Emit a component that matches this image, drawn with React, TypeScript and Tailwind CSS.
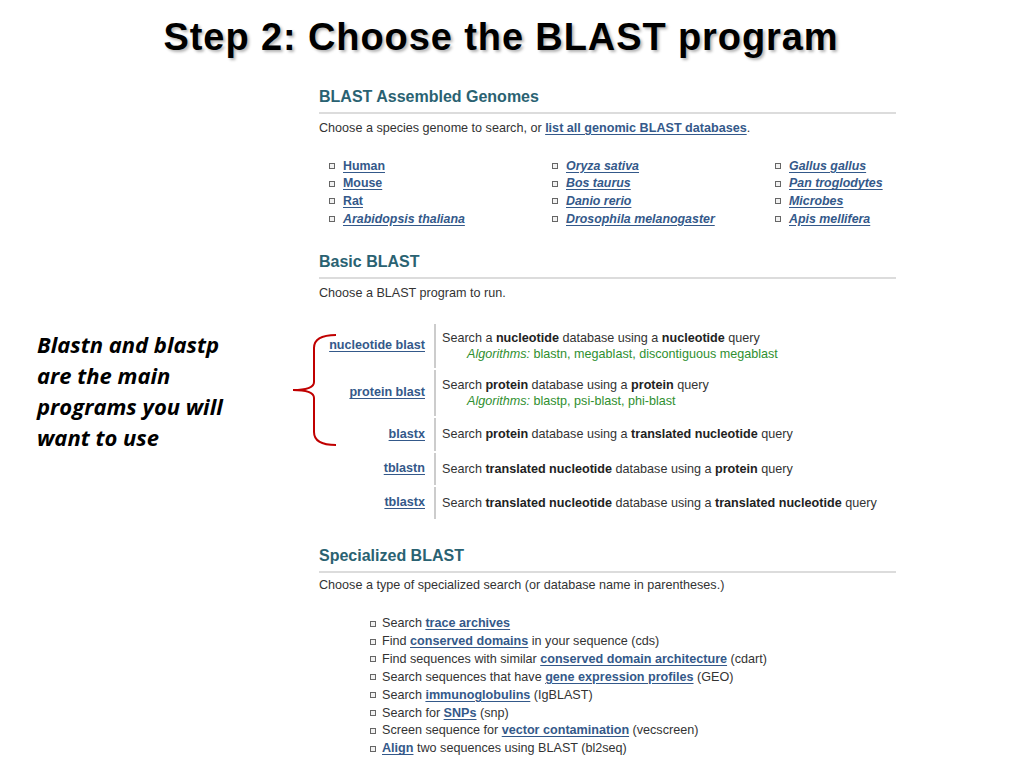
import React from "react";

const Bullet = ({ gap }: { gap: string }) => (
  <span className={`inline-block w-[6px] h-[6px] border border-[#666] bg-[#f2f2f2] shrink-0 ${gap}`} />
);

const L = ({ children, italic }: { children: React.ReactNode; italic?: boolean }) => (
  <a
    className={`font-bold text-[#34598a] underline underline-offset-[2px] decoration-[#34598a] cursor-pointer ${italic ? "italic" : ""}`}
  >
    {children}
  </a>
);

const B = ({ children }: { children: React.ReactNode }) => (
  <b className="font-bold text-[#222]">{children}</b>
);

const Heading = ({ children }: { children: React.ReactNode }) => (
  <div className="h-[20px] leading-[20px] text-[16px] font-bold tracking-[0px] text-[#2a6272]">
    {children}
  </div>
);

const Rule = () => <div className="mt-[5px] h-[2px] bg-[#dcdcdc] w-[577px]" />;

const species: { name: string; italic: boolean }[][] = [
  [
    { name: "Human", italic: false },
    { name: "Mouse", italic: false },
    { name: "Rat", italic: false },
    { name: "Arabidopsis thaliana", italic: true },
  ],
  [
    { name: "Oryza sativa", italic: true },
    { name: "Bos taurus", italic: true },
    { name: "Danio rerio", italic: true },
    { name: "Drosophila melanogaster", italic: true },
  ],
  [
    { name: "Gallus gallus", italic: true },
    { name: "Pan troglodytes", italic: true },
    { name: "Microbes", italic: true },
    { name: "Apis mellifera", italic: true },
  ],
];

export default function App() {
  return (
    <div className="w-[1024px] h-[768px] bg-white overflow-hidden font-['Liberation_Sans',Arial,sans-serif]">
      {/* Title */}
      <div className="h-[80px] pt-[17px] pr-[22px] text-center">
        <h1 className="text-[38px] leading-[40px] tracking-[0.9px] font-bold text-black [text-shadow:2px_2px_3px_rgba(0,0,0,0.3)]">
          Step 2: Choose the BLAST program
        </h1>
      </div>

      <div className="flex pt-[7px]">
        {/* Left annotation */}
        <div className="w-[319px] pl-[37px] pt-[242px]">
          <p className="font-['Open_Sans',sans-serif] italic font-bold text-[22px] leading-[31px] text-black">
            Blastn and blastp
            <br />
            are the main
            <br />
            programs you will
            <br />
            want to use
          </p>
        </div>

        {/* Screenshot */}
        <div className="w-[600px] text-[12.6px] text-[#333]">
          <Heading>BLAST Assembled Genomes</Heading>
          <Rule />
          <div className="mt-[5px] leading-[18px]">
            Choose a species genome to search, or <L>list all genomic BLAST databases</L>.
          </div>

          <div className="mt-[20px] ml-[10px] grid grid-cols-[223px_223px_auto] text-[12.4px]">
            {species.map((col, i) => (
              <div key={i} className="flex flex-col">
                {col.map((s) => (
                  <div key={s.name} className="flex items-center h-[17.7px]">
                    <Bullet gap="mr-[8px]" />
                    <L italic={s.italic}>{s.name}</L>
                  </div>
                ))}
              </div>
            ))}
          </div>

          <div className="mt-[24px]">
            <Heading>Basic BLAST</Heading>
          </div>
          <Rule />
          <div className="mt-[5px] leading-[18px]">Choose a BLAST program to run.</div>

          {/* Program table */}
          <div className="relative mt-[22px] flex flex-col gap-[2px]">
            <svg
              className="absolute left-[-28px] top-[8px]"
              width="46"
              height="116"
              viewBox="0 0 46 116"
              fill="none"
            >
              <path
                d="M45 3 Q23 3 23 16 L23 50 Q23 58 2 58 Q23 58 23 66 L23 100 Q23 113 45 113"
                stroke="#c00000"
                strokeWidth="2"
              />
            </svg>

            <div className="flex h-[44px]">
              <div className="w-[115px] pr-[9px] flex items-center justify-end">
                <L>nucleotide blast</L>
              </div>
              <div className="border-l-2 border-[#cccccc] pl-[6px] flex flex-col justify-center leading-[16px]">
                <div>
                  Search a <B>nucleotide</B> database using a <B>nucleotide</B> query
                </div>
                <div className="pl-[25px] text-[#2f8f2f]">
                  <i>Algorithms:</i> blastn, megablast, discontiguous megablast
                </div>
              </div>
            </div>

            <div className="flex h-[46px]">
              <div className="w-[115px] pr-[9px] flex items-center justify-end">
                <L>protein blast</L>
              </div>
              <div className="border-l-2 border-[#cccccc] pl-[6px] flex flex-col justify-center leading-[16px]">
                <div>
                  Search <B>protein</B> database using a <B>protein</B> query
                </div>
                <div className="pl-[25px] text-[#2f8f2f]">
                  <i>Algorithms:</i> blastp, psi-blast, phi-blast
                </div>
              </div>
            </div>

            <div className="flex h-[33px]">
              <div className="w-[115px] pr-[9px] flex items-center justify-end">
                <L>blastx</L>
              </div>
              <div className="border-l-2 border-[#cccccc] pl-[6px] flex flex-col justify-center leading-[16px]">
                <div>
                  Search <B>protein</B> database using a <B>translated nucleotide</B> query
                </div>
              </div>
            </div>

            <div className="flex h-[32px]">
              <div className="w-[115px] pr-[9px] flex items-center justify-end">
                <L>tblastn</L>
              </div>
              <div className="border-l-2 border-[#cccccc] pl-[6px] flex flex-col justify-center leading-[16px]">
                <div>
                  Search <B>translated nucleotide</B> database using a <B>protein</B> query
                </div>
              </div>
            </div>

            <div className="flex h-[32px]">
              <div className="w-[115px] pr-[9px] flex items-center justify-end">
                <L>tblastx</L>
              </div>
              <div className="border-l-2 border-[#cccccc] pl-[6px] flex flex-col justify-center leading-[16px]">
                <div>
                  Search <B>translated nucleotide</B> database using a <B>translated nucleotide</B> query
                </div>
              </div>
            </div>
          </div>

          <div className="mt-[27px]">
            <Heading>Specialized BLAST</Heading>
          </div>
          <Rule />
          <div className="mt-[3px] leading-[18px]">
            Choose a type of specialized search (or database name in parentheses.)
          </div>

          <ul className="mt-[21px] ml-[51px] flex flex-col">
            <li className="flex items-center h-[17.86px]">
              <Bullet gap="mr-[6px]" />
              <span>
                Search <L>trace archives</L>
              </span>
            </li>
            <li className="flex items-center h-[17.86px]">
              <Bullet gap="mr-[6px]" />
              <span>
                Find <L>conserved domains</L> in your sequence (cds)
              </span>
            </li>
            <li className="flex items-center h-[17.86px]">
              <Bullet gap="mr-[6px]" />
              <span>
                Find sequences with similar <L>conserved domain architecture</L> (cdart)
              </span>
            </li>
            <li className="flex items-center h-[17.86px]">
              <Bullet gap="mr-[6px]" />
              <span>
                Search sequences that have <L>gene expression profiles</L> (GEO)
              </span>
            </li>
            <li className="flex items-center h-[17.86px]">
              <Bullet gap="mr-[6px]" />
              <span>
                Search <L>immunoglobulins</L> (IgBLAST)
              </span>
            </li>
            <li className="flex items-center h-[17.86px]">
              <Bullet gap="mr-[6px]" />
              <span>
                Search for <L>SNPs</L> (snp)
              </span>
            </li>
            <li className="flex items-center h-[17.86px]">
              <Bullet gap="mr-[6px]" />
              <span>
                Screen sequence for <L>vector contamination</L> (vecscreen)
              </span>
            </li>
            <li className="flex items-center h-[17.86px]">
              <Bullet gap="mr-[6px]" />
              <span>
                <L>Align</L> two sequences using BLAST (bl2seq)
              </span>
            </li>
          </ul>
        </div>
      </div>
    </div>
  );
}
